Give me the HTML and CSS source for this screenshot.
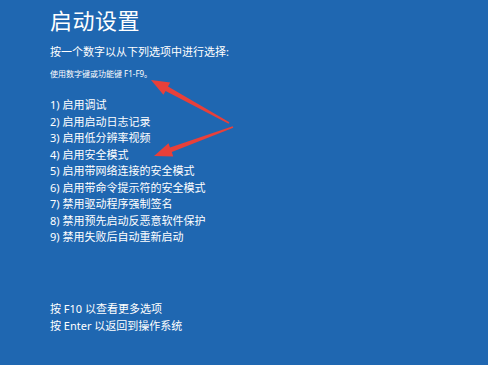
FILE: index.html
```html
<!DOCTYPE html>
<html lang="zh-CN">
<head>
<meta charset="utf-8">
<title>启动设置</title>
<link rel="stylesheet" href="styles.css">
</head>
<body>
<main class="screen">
  <h1 class="title">启动设置</h1>
  <p class="subtitle">按一个数字以从下列选项中进行选择:</p>
  <p class="hint">使用数字键或功能键 F1-F9。</p>
  <ol class="options">
    <li>1) 启用调试</li>
    <li>2) 启用启动日志记录</li>
    <li>3) 启用低分辨率视频</li>
    <li>4) 启用安全模式</li>
    <li>5) 启用带网络连接的安全模式</li>
    <li>6) 启用带命令提示符的安全模式</li>
    <li>7) 禁用驱动程序强制签名</li>
    <li>8) 禁用预先启动反恶意软件保护</li>
    <li>9) 禁用失败后自动重新启动</li>
  </ol>
  <div class="footer">
    <p>按 F10 以查看更多选项</p>
    <p>按 Enter 以返回到操作系统</p>
  </div>
  <svg class="annot" width="488" height="365" viewBox="0 0 488 365" aria-hidden="true">
    <polygon points="229.4,122.3 168.0,86.5 170.2,82.6 151,80 163.4,94.8 165.6,90.9 228.6,123.7"/>
    <polygon points="233.3,127.8 171.8,152.1 173.3,156.4 154,156 168.5,143.2 170.0,147.5 232.7,126.2"/>
  </svg>
</main>
</body>
</html>
```
FILE: styles.css
```css
html, body {
  margin: 0;
  padding: 0;
  background: #1f67b1;
}

.screen {
  position: relative;
  width: 488px;
  height: 365px;
  box-sizing: border-box;
  padding: 7px 0 0 50px;
  background: #1f67b1;
  color: #ffffff;
  font-family: "Noto Sans", "Noto Sans CJK SC", sans-serif;
  overflow: hidden;
}

.title {
  margin: 0;
  font-size: 22px;
  line-height: 26px;
  font-weight: 400;
  letter-spacing: 0.5px;
}

.subtitle {
  margin: 11px 0 0;
  font-size: 11px;
  line-height: 16px;
}

.hint {
  margin: 8px 0 0;
  font-size: 8px;
  line-height: 12px;
}

.options {
  list-style: none;
  margin: 17px 0 0;
  padding: 0;
  font-size: 11px;
  line-height: 16.5px;
}

.footer {
  margin-top: 54px;
  font-size: 11px;
  line-height: 17px;
}

.footer p {
  margin: 0;
}

.annot {
  position: absolute;
  left: 0;
  top: 0;
  fill: #e8403a;
}
```
